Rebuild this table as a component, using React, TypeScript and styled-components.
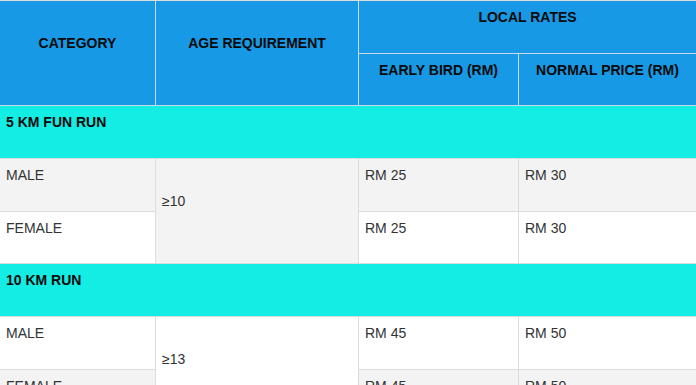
import React from "react";
import styled, { createGlobalStyle } from "styled-components";

const Global = createGlobalStyle`
  html, body {
    margin: 0;
    padding: 0;
    background: #ffffff;
    overflow: hidden;
  }
  body {
    font-family: "Liberation Sans", Arial, sans-serif;
  }
`;

const Table = styled.table`
  width: 697px;
  table-layout: fixed;
  border-collapse: separate;
  border-spacing: 0;
  border-top: 1px solid #dcdcdc;
  font-family: "Liberation Sans", Arial, sans-serif;
  font-size: 14px;
`;

const Col = styled.col<{ $w: number }>`
  width: ${(p) => p.$w}px;
`;

const Cell = styled.td<{ $align?: "left" | "center" }>`
  box-sizing: border-box;
  padding: 6px 6px;
  vertical-align: middle;
  text-align: ${(p) => p.$align ?? "left"};
  border-right: 1px solid #dcdcdc;
  border-bottom: 1px solid #dcdcdc;
`;

const HeadCell = styled(Cell).attrs({ as: "th" })`
  background: #1799e6;
  color: #0a0a0a;
  font-weight: bold;
  border-color: #c9d9e6;
`;

const SectionCell = styled(Cell)`
  background: #13ede3;
  color: #0a0a0a;
  font-weight: bold;
  border-color: #d6dede;
`;

const BodyCell = styled(Cell)<{ $shade?: boolean }>`
  background: ${(p) => (p.$shade ? "#f3f3f3" : "#ffffff")};
  color: #333333;
`;

const Content = styled.div`
  line-height: 20px;
  min-height: 39.7px;
`;

type Entry = { label: string; early: string; normal: string };
type Section = { title: string; age: string; entries: Entry[]; startShade: boolean };

const sections: Section[] = [
  {
    title: "5 KM FUN RUN",
    age: "≥10",
    startShade: true,
    entries: [
      { label: "MALE", early: "RM 25", normal: "RM 30" },
      { label: "FEMALE", early: "RM 25", normal: "RM 30" },
    ],
  },
  {
    title: "10 KM RUN",
    age: "≥13",
    startShade: false,
    entries: [
      { label: "MALE", early: "RM 45", normal: "RM 50" },
      { label: "FEMALE", early: "RM 45", normal: "RM 50" },
    ],
  },
];

export default function App() {
  return (
    <>
      <Global />
      <Table>
        <colgroup>
          <Col $w={156} />
          <Col $w={203} />
          <Col $w={160} />
          <Col $w={178} />
        </colgroup>
        <thead>
          <tr>
            <HeadCell rowSpan={2} $align="center">
              <Content>CATEGORY</Content>
            </HeadCell>
            <HeadCell rowSpan={2} $align="center">
              <Content>AGE REQUIREMENT</Content>
            </HeadCell>
            <HeadCell colSpan={2} $align="center">
              <Content>LOCAL RATES</Content>
            </HeadCell>
          </tr>
          <tr>
            <HeadCell $align="center">
              <Content>EARLY BIRD (RM)</Content>
            </HeadCell>
            <HeadCell $align="center">
              <Content>NORMAL PRICE (RM)</Content>
            </HeadCell>
          </tr>
        </thead>
        <tbody>
          {sections.map((s) => (
            <React.Fragment key={s.title}>
              <tr>
                <SectionCell colSpan={4}>
                  <Content>{s.title}</Content>
                </SectionCell>
              </tr>
              {s.entries.map((e, i) => {
                const shade = i % 2 === 0 ? s.startShade : !s.startShade;
                return (
                  <tr key={e.label}>
                    <BodyCell $shade={shade}>
                      <Content>{e.label}</Content>
                    </BodyCell>
                    {i === 0 && (
                      <BodyCell $shade={shade} rowSpan={s.entries.length}>
                        <Content>{s.age}</Content>
                      </BodyCell>
                    )}
                    <BodyCell $shade={shade}>
                      <Content>{e.early}</Content>
                    </BodyCell>
                    <BodyCell $shade={shade}>
                      <Content>{e.normal}</Content>
                    </BodyCell>
                  </tr>
                );
              })}
            </React.Fragment>
          ))}
        </tbody>
      </Table>
    </>
  );
}
